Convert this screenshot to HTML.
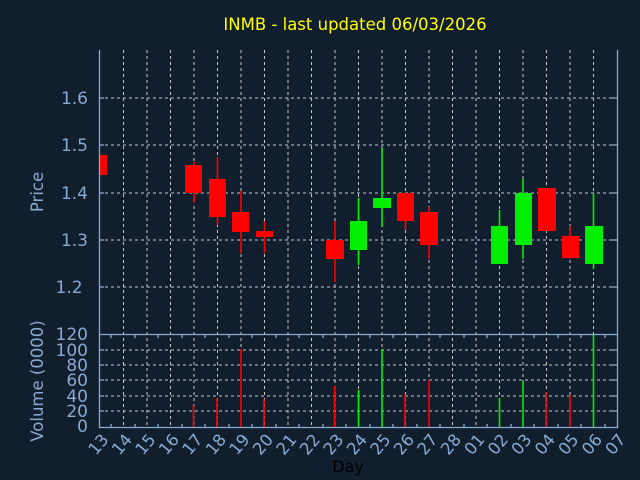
<!DOCTYPE html><html><head><style>body{margin:0;background:#111e2e}svg{display:block}text{font-family:"DejaVu Sans","Liberation Sans",sans-serif;fill:#8aaad0}</style></head><body>
<svg width="640" height="480" xmlns="http://www.w3.org/2000/svg">
<rect width="640" height="480" fill="#111e2e"/>
<text x="355" y="30" font-size="16.5" text-anchor="middle" style="fill:#ffff00">INMB - last updated 06/03/2026</text>
<g stroke="#c8c8c8" stroke-dasharray="3,3" stroke-width="1">
<path d="M99 98H617M99 145H617M99 193H617M99 240H617M99 287H617M99 350H617M99 365H617M99 380H617M99 396H617M99 411H617"/>
<path d="M123.5 50V427M147 50V427M170.5 50V427M194 50V427M217.5 50V427M241 50V427M264.5 50V427M288 50V427M311.5 50V427M335 50V427M358.5 50V427M382 50V427M405.5 50V427M429 50V427M452.5 50V427M476 50V427M499.5 50V427M523 50V427M546.5 50V427M570 50V427M593.5 50V427"/>
</g>
<g fill="#ff0000" stroke="#ff0000" stroke-width="1.6">
<rect x="99" y="155" width="8" height="20" stroke="none"/>
<path d="M194 162V203M217.5 157V225M241 191V253M264.5 221V253M335 221V282M405.5 193V230M429 207V259M546.5 188V231M570 226V259"/>
<rect x="185" y="165" width="17" height="28" stroke="none"/>
<rect x="209" y="179" width="17" height="38" stroke="none"/>
<rect x="232" y="212" width="17" height="20" stroke="none"/>
<rect x="256" y="231" width="17" height="6" stroke="none"/>
<rect x="326" y="240" width="18" height="19" stroke="none"/>
<rect x="397" y="193" width="17" height="28" stroke="none"/>
<rect x="420" y="212" width="18" height="33" stroke="none"/>
<rect x="538" y="188" width="18" height="43" stroke="none"/>
<rect x="562" y="236" width="17" height="22" stroke="none"/>
<path d="M193.5 405V427M217 398V427M241 349V427M264 399V427M334.5 386V427M405 394V427M429 380V427M546 392V427M570 395V427"/>
</g>
<g fill="#00ee00" stroke="#00ee00" stroke-width="1.6">
<path d="M358.5 198V265M382 148V227M499.5 210V264M523 179V259M593.5 193V269"/>
<rect x="350" y="221" width="17" height="29" stroke="none"/>
<rect x="373" y="198" width="18" height="10" stroke="none"/>
<rect x="491" y="226" width="17" height="38" stroke="none"/>
<rect x="515" y="193" width="17" height="52" stroke="none"/>
<rect x="585" y="226" width="18" height="38" stroke="none"/>
<path d="M358.5 390V427M382 349V427M499.5 398V427M523 381V427M593.5 335V427"/>
</g>
<g stroke="#8aaad0" fill="none" stroke-width="1.3">
<path d="M99.5 50V427.5H617.5V50M99 334.5H617"/>
<path d="M99 98h5M99 145h5M99 193h5M99 240h5M99 287h5M617 98h-5M617 145h-5M617 193h-5M617 240h-5M617 287h-5"/>
<path d="M99 350h5M99 365h5M99 380h5M99 396h5M99 411h5M617 350h-5M617 365h-5M617 380h-5M617 396h-5M617 411h-5"/>
<path d="M111 427v-3M135 427v-3M158 427v-3M182 427v-3M205 427v-3M229 427v-3M252 427v-3M276 427v-3M299 427v-3M323 427v-3M346 427v-3M370 427v-3M393 427v-3M417 427v-3M440 427v-3M464 427v-3M487 427v-3M511 427v-3M534 427v-3M558 427v-3M581 427v-3M605 427v-3"/>
<path d="M111 335v3M135 335v3M158 335v3M182 335v3M205 335v3M229 335v3M252 335v3M276 335v3M299 335v3M323 335v3M346 335v3M370 335v3M393 335v3M417 335v3M440 335v3M464 335v3M487 335v3M511 335v3M534 335v3M558 335v3M581 335v3M605 335v3"/>
</g>
<text font-size="17" text-anchor="end">
<tspan x="88" y="104">1.6</tspan><tspan x="88" y="151">1.5</tspan><tspan x="88" y="199">1.4</tspan><tspan x="88" y="246">1.3</tspan><tspan x="88" y="293">1.2</tspan>
<tspan x="88" y="340">120</tspan><tspan x="88" y="356">100</tspan><tspan x="88" y="371">80</tspan><tspan x="88" y="386">60</tspan><tspan x="88" y="402">40</tspan><tspan x="88" y="417">20</tspan><tspan x="88" y="432">0</tspan>
</text>
<text font-size="16.5" transform="translate(43,192) rotate(-90)" text-anchor="middle">Price</text>
<text font-size="16.5" transform="translate(43,381) rotate(-90)" text-anchor="middle">Volume (0000)</text>
<text x="348" y="472" font-size="16" text-anchor="middle" style="fill:#000">Day</text>
<g font-size="16.5">
<text transform="translate(96,456) rotate(-50)">13</text>
<text transform="translate(119.5,456) rotate(-50)">14</text>
<text transform="translate(143,456) rotate(-50)">15</text>
<text transform="translate(166.5,456) rotate(-50)">16</text>
<text transform="translate(190,456) rotate(-50)">17</text>
<text transform="translate(213.5,456) rotate(-50)">18</text>
<text transform="translate(237,456) rotate(-50)">19</text>
<text transform="translate(260.5,456) rotate(-50)">20</text>
<text transform="translate(284,456) rotate(-50)">21</text>
<text transform="translate(307.5,456) rotate(-50)">22</text>
<text transform="translate(331,456) rotate(-50)">23</text>
<text transform="translate(354.5,456) rotate(-50)">24</text>
<text transform="translate(378,456) rotate(-50)">25</text>
<text transform="translate(401.5,456) rotate(-50)">26</text>
<text transform="translate(425,456) rotate(-50)">27</text>
<text transform="translate(448.5,456) rotate(-50)">28</text>
<text transform="translate(472,456) rotate(-50)">01</text>
<text transform="translate(495.5,456) rotate(-50)">02</text>
<text transform="translate(519,456) rotate(-50)">03</text>
<text transform="translate(542.5,456) rotate(-50)">04</text>
<text transform="translate(566,456) rotate(-50)">05</text>
<text transform="translate(589.5,456) rotate(-50)">06</text>
<text transform="translate(613,456) rotate(-50)">07</text>
</g>
</svg></body></html>
